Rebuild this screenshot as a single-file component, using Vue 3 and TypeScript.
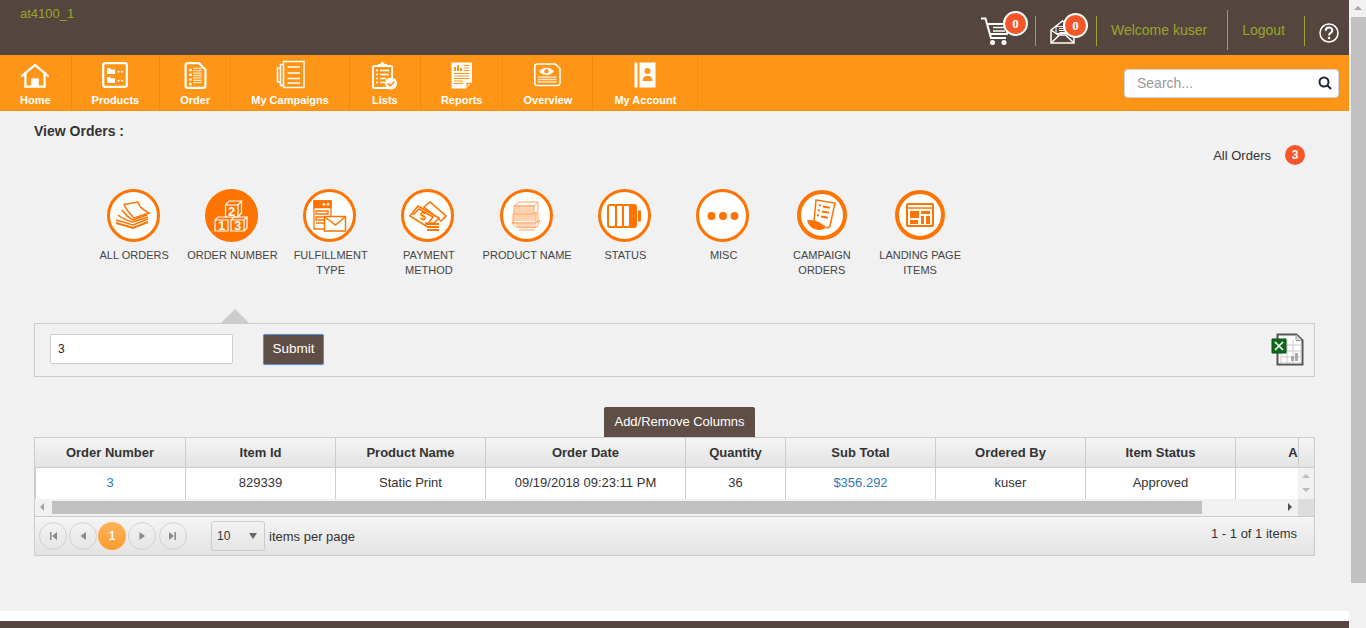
<script setup lang="ts">
const navItems = [
  { key: 'home', label: 'Home' },
  { key: 'products', label: 'Products' },
  { key: 'order', label: 'Order' },
  { key: 'campaigns', label: 'My Campaigns' },
  { key: 'lists', label: 'Lists' },
  { key: 'reports', label: 'Reports' },
  { key: 'overview', label: 'Overview' },
  { key: 'account', label: 'My Account' },
]

const tabs = [
  { key: 'all', label: 'ALL ORDERS' },
  { key: 'number', label: 'ORDER NUMBER', active: true },
  { key: 'fulfillment', label: 'FULFILLMENT TYPE' },
  { key: 'payment', label: 'PAYMENT METHOD' },
  { key: 'product', label: 'PRODUCT NAME' },
  { key: 'status', label: 'STATUS' },
  { key: 'misc', label: 'MISC' },
  { key: 'campaign', label: 'CAMPAIGN ORDERS', small: true },
  { key: 'landing', label: 'LANDING PAGE ITEMS', small: true },
]

const columns = ['Order Number', 'Item Id', 'Product Name', 'Order Date', 'Quantity', 'Sub Total', 'Ordered By', 'Item Status', 'Action']

const cells = [
  { text: '3', link: true },
  { text: '829339' },
  { text: 'Static Print' },
  { text: '09/19/2018 09:23:11 PM' },
  { text: '36' },
  { text: '$356.292', link: true },
  { text: 'kuser' },
  { text: 'Approved' },
  { text: '' },
]

const pagerIcons = [
  'M3 2h1.500v8H3zM10 2v8L5 6z',
  'M9 2v8L3.500 6z',
  null,
  'M3.500 2v8L9 6z',
  'M2 2v8l5-4zM7.500 2H9v8H7.500z',
]
</script>

<template>
  <div class="window">
    <div class="page">
      <header class="topbar">
        <span class="site-name">at4100_1</span>
        <div class="top-actions">
          <div class="top-icon cart">
            <svg width="34" height="30" viewBox="0 0 34 30" fill="none" stroke="#fff">
              <path d="M1 2.500h4.500L11 22h15" stroke-width="2" />
              <path d="M7 8h22l-2 10H10" stroke-width="2" />
              <path d="M13 11.500h13M13 15h12" stroke-width="1.500" />
              <circle cx="12.500" cy="26.500" r="2.500" fill="#fff" stroke="none" />
              <circle cx="24" cy="26.500" r="2.500" fill="#fff" stroke="none" />
            </svg>
            <span class="count count-cart">0</span>
          </div>
          <i class="divider divider-short divider-cart"></i>
          <div class="top-icon mail">
            <svg width="25" height="24" viewBox="0 0 25 24" fill="none" stroke="#fff" stroke-width="1.500">
              <path d="M1 10 12.500 1 24 10v13H1z" />
              <path d="M1 23l8.500-8h6l8.500 8M1 10l8 5.500M24 10l-8 5.500" />
              <path d="M6 6.500h13v7H6z" fill="#54463e" stroke-width="1" />
              <path d="M9 8.500h7M9 10.500h7M9.500 12.500h6" stroke-width="1" />
            </svg>
            <span class="count count-mail">0</span>
          </div>
          <i class="divider divider-short divider-mail"></i>
          <span class="top-link welcome">Welcome kuser</span>
          <i class="divider divider-tall"></i>
          <span class="top-link logout">Logout</span>
          <i class="divider divider-short divider-logout"></i>
          <svg class="help" width="20" height="20" viewBox="0 0 20 20" fill="none">
            <circle cx="10" cy="10" r="9" stroke="#fff" stroke-width="1.500" />
            <path d="M6.800 7.800c0-4.200 6.500-4.200 6.500-.4 0 2.500-3.300 2.400-3.300 5" stroke="#fff" stroke-width="2" />
            <circle cx="10" cy="15" r="1.300" fill="#fff" />
          </svg>
        </div>
      </header>

      <nav class="navbar">
        <a v-for="item in navItems" :key="item.key" class="nav-item">
          <span class="nav-icon">
            <svg v-if="item.key === 'home'" width="30" height="25" viewBox="0 0 30 26" fill="none" stroke="#fff" stroke-width="2.400">
              <path d="M1.500 13.500 15 2l13.500 11.500" stroke-linecap="round" />
              <path d="M5 11.500V24.500h20V11.500" />
              <path d="M11 16h8v8h-8z" fill="#fff" stroke="none" />
            </svg>
            <svg v-else-if="item.key === 'products'" width="26" height="26" viewBox="0 0 26 26" fill="none">
              <rect x="1.200" y="1.200" width="23.600" height="23.600" rx="2" stroke="#fff" stroke-width="2.200" />
              <path d="M5 6h3l1 1.500h4V12H5zM5 15h3l1 1.500h4V21H5z" fill="#fff" />
              <path d="M15.500 9h2v1.500h-2zM19 9h2v1.500h-2zM15.500 18h2v1.500h-2zM19 18h2v1.500h-2z" fill="#fff" />
            </svg>
            <svg v-else-if="item.key === 'order'" width="23" height="27" viewBox="0 0 23 28" fill="none">
              <path d="M3 1.200h12l6.800 6.800v16.500a2.300 2.300 0 0 1-2.300 2.300H3.500a2.300 2.300 0 0 1-2.300-2.300V3a2 2 0 0 1 1.800-1.800z" stroke="#fff" stroke-width="2.200" />
              <path d="M5 7h2.500v2.500H5zM5 12h2.500v2.500H5zM5 17h2.500v2.500H5zM5 21.500h2.500V24H5z" fill="#fff" />
              <path d="M9 6.500h9M9 9h9M9 11.500h9M9 14h9M9 16.500h9M9 19h9M9 21.500h9" stroke="#ffe3bd" stroke-width="1.300" />
            </svg>
            <svg v-else-if="item.key === 'campaigns'" width="29" height="30" viewBox="0 0 29 30" fill="none" stroke="#fff">
              <path d="M7.500 1.500h20.500v26H7.500z" stroke-width="1.500" />
              <path d="M7.500 4.500H4.500v21h3M4.500 8H1.500v14h3" stroke-width="1.500" />
              <path d="M11.500 7h12.500M11.500 13h12.500M11.500 18.500h12.500M11.500 23h12.500" stroke-width="1.300" />
            </svg>
            <svg v-else-if="item.key === 'lists'" width="25" height="29" viewBox="0 0 25 29" fill="none">
              <path d="M2 5h17a1 1 0 0 1 1 1v20a1 1 0 0 1-1 1H2a1 1 0 0 1-1-1V6a1 1 0 0 1 1-1z" stroke="#fff" stroke-width="1.800" />
              <path d="M6 5.500V3h2.500a2 2 0 0 1 4 0H15v2.500z" fill="#fff" />
              <path d="M4 9.500h2M4 13.500h2M4 17.500h2M4 21.500h2M8 9.500h9M8 13.500h9M8 17.500h6M8 21.500h5" stroke="#fff" stroke-width="1.400" />
              <circle cx="19" cy="22.500" r="6" fill="#fff" />
              <path d="M16 22.500l2.300 2.300 4-4.300" stroke="#ff9517" stroke-width="1.800" />
            </svg>
            <svg v-else-if="item.key === 'reports'" width="22" height="27" viewBox="0 0 22 27" fill="none">
              <path d="M0.500 0.500h20.500v20l-6 6H0.500z" fill="#fff" />
              <path d="M3 9V5h2v4zM6 9V3h2v6zM9 9V6h2v3z" fill="#ff9517" />
              <path d="M12.500 3.500h6M12.500 6h6M12.500 8.500h6M3 11.500h15.500M3 14h15.500M3 16.500h15.500M3 19h9M3 21.500h9" stroke="#ff9517" stroke-width="1" />
              <path d="M16 25.500v-4h4.500" stroke="#ff9517" stroke-width="1.300" />
            </svg>
            <svg v-else-if="item.key === 'overview'" width="27" height="24" viewBox="0 0 27 24" fill="none">
              <path d="M3 1h18.500l4.500 4.500V20a2.500 2.500 0 0 1-2.500 2.500H3A2.500 2.500 0 0 1 .8 20V3.500A2.300 2.300 0 0 1 3 1z" stroke="#fff" stroke-width="1.600" />
              <path d="M5 8.500c4-5 11-5 15 0-4 4.500-11 4.500-15 0z" fill="#fff" />
              <circle cx="12.500" cy="8.300" r="2.200" fill="#ff9517" />
              <path d="M4 14h18.500M4 16.500h18.500M4 19h18.500" stroke="#ffe3bd" stroke-width="1.300" />
            </svg>
            <svg v-else width="22" height="26" viewBox="0 0 22 26" fill="none">
              <path d="M0.500 0.500h3v25h-3z" fill="#fff" />
              <path d="M5.500 0.500h16v25h-16z" fill="#fff" />
              <circle cx="13.500" cy="9" r="3" fill="#ff9517" />
              <path d="M8.500 19c0-7 10-7 10 0z" fill="#ff9517" />
            </svg>
          </span>
          <span class="nav-label">{{ item.label }}</span>
        </a>
        <div class="search">
          <input class="search-input" type="text" placeholder="Search..." />
          <svg class="search-icon" width="14" height="14" viewBox="0 0 14 14" fill="none" stroke="#1b2733" stroke-width="2">
            <circle cx="6" cy="6" r="4.500" />
            <path d="M9.500 9.500 13 13" />
          </svg>
        </div>
      </nav>

      <main class="main">
        <div class="title">View Orders :</div>
        <div class="summary">
          <span>All Orders</span>
          <span class="summary-count">3</span>
        </div>

        <div class="tabs">
          <div v-for="tab in tabs" :key="tab.key" class="tab">
            <span class="tab-circle" :class="{ 'tab-active': tab.active, 'tab-small': tab.small }">
              <svg v-if="tab.key === 'all'" width="38" height="30" viewBox="0 0 38 30" fill="none" stroke="#ff7300">
                <path d="M10 3.500 24 1c1 5 5 8 11 11L20 17C16 13 12 8 10 3.500z" stroke-width="1.500" />
                <path d="M8 9c3 4 7 8 11 10l14-5M4 14c5 4 10 6 15 7l15-5M2 19l17 5 15-6" stroke-width="1.500" />
                <path d="M2 22l17 5 15-6" stroke-width="2" />
              </svg>
              <svg v-else-if="tab.key === 'number'" width="34" height="32" viewBox="0 0 34 32" fill="none" stroke="#fff" stroke-width="1.200">
                <path d="M11.500 5h12.500v12H11.500zM11.500 5 15 1h12.500L24 5M24 17l3.500-4V1" />
                <path d="M1 20h13v11H1zM1 20l3-3h9" />
                <path d="M17 20h13v11H17zM17 20l3-3h13l-3 3M30 31l3-3V17" />
                <text x="14.300" y="15.500" class="cube-digit">2</text>
                <text x="4.200" y="30" class="cube-digit">1</text>
                <text x="20.200" y="30" class="cube-digit">3</text>
              </svg>
              <svg v-else-if="tab.key === 'fulfillment'" width="34" height="32" viewBox="0 0 34 32" fill="none" stroke="#ff7300" stroke-width="1.300">
                <path d="M1 1h17v28H1z" />
                <path d="M1 1h17v6.500H1z" fill="#ff7300" />
                <circle cx="11" cy="4.200" r="1.300" fill="#fff" stroke="none" />
                <circle cx="15" cy="4.200" r="1.300" fill="#fff" stroke="none" />
                <path d="M3 11h12v3H3zM3 17h12v3H3zM3 23h9" />
                <path d="M11.500 16.500h21v14.500h-21z" fill="#fff" stroke-width="1.500" />
                <path d="M12 17l10.500 8L32 17" stroke-width="1.500" />
              </svg>
              <svg v-else-if="tab.key === 'payment'" width="38" height="30" viewBox="0 0 38 30" fill="none" stroke="#ff7300" stroke-width="1.600">
                <path d="M15 6 21 1l16 14-5 5z" />
                <path d="M9 5 30 17l-5 5H17v3L1 15z" fill="#fff" />
                <path d="M4 14 10 8 24 16l-4 5" />
                <text x="11" y="19" class="dollar">$</text>
                <path d="M18 23h12M18 26h12M18 29h12" stroke-width="1.800" />
              </svg>
              <svg v-else-if="tab.key === 'product'" width="30" height="30" viewBox="0 0 30 30" fill="none" stroke="#ffa765" stroke-width="1">
                <path d="M3 5 8 1h19l-4 4zM3 5h20v8H3zM23 5l4-4v8l-4 4" />
                <path d="M3 7h20M3 9h20M3 11h20" />
                <path d="M2 13h23v9H2zM2 15h23M2 17h23M2 19h23M25 13l2-2v9l-2 2" />
                <path d="M0.500 22 4 19M1 22h24l4-3-3 7H5z" />
                <path d="M5 24h20M6 26.500h19M8 29h16" />
              </svg>
              <svg v-else-if="tab.key === 'status'" width="34" height="24" viewBox="0 0 34 24" fill="none">
                <rect x="1" y="1" width="28" height="22" rx="2" stroke="#ff7300" stroke-width="2" />
                <path d="M9 1.500v21M16 1.500v21M23 1.500v21" stroke="#ff7300" stroke-width="2" />
                <path d="M24 2h5v20h-5z" fill="#ff7300" />
                <path d="M31 6.500h3v11h-3z" fill="#ff7300" />
              </svg>
              <svg v-else-if="tab.key === 'misc'" width="32" height="10" viewBox="0 0 32 10" fill="#ff7300">
                <circle cx="4.500" cy="5" r="4" />
                <circle cx="16" cy="5" r="4" />
                <circle cx="27.500" cy="5" r="4" />
              </svg>
              <svg v-else-if="tab.key === 'campaign'" width="30" height="32" viewBox="0 0 30 32" fill="none" stroke="#ff7300" stroke-width="1.500">
                <path d="M9 1 28 4l-5 23c-2 3-5 2-6 0L7 22z" />
                <path d="M1 22c5-1 9 2 11 2s3 3 5 5c-5 3-14 0-16-7z" fill="#ff7300" />
                <path d="M12 6l2 .4M11 11l2 .4M10 16l2 .4M16 7.500l7 1.300M15 12.500l7 1.300M14 17.500l7 1.300" stroke-width="2" />
              </svg>
              <svg v-else width="28" height="24" viewBox="0 0 28 24" fill="none">
                <rect x="1" y="1" width="26" height="22" rx="1" stroke="#ff7300" stroke-width="2" />
                <path d="M1 5h26" stroke="#ff7300" stroke-width="1.500" />
                <path d="M4 8h9v7H4zM15 8h9v3H15zM4 17h8v4H4zM15 13h3v8h-3zM20 13h4v8h-4z" fill="#ff7300" />
              </svg>
            </span>
            <span class="tab-label">{{ tab.label }}</span>
          </div>
        </div>

        <div class="filter">
          <span class="filter-arrow"></span>
          <input class="filter-input" type="text" value="3" />
          <button class="filter-submit" type="button">Submit</button>
          <svg class="excel" width="33" height="33" viewBox="0 0 33 33">
            <path d="M6.500 1.500h19l6 6v24h-25z" fill="#fff" stroke="#555" stroke-width="2" />
            <path d="M25 1.500v6h6" fill="#ddd" stroke="#999" />
            <path d="M10 12h20v18H10z" fill="none" stroke="#c9c9c9" />
            <path d="M16 7v23M22 7v23M10 18h20M10 24h20" stroke="#c9c9c9" />
            <path d="M20 28v-5h3v5zM24 28v-8h3v8z" fill="#aaa" />
            <path d="M1 6h14v14H1z" fill="#0c6a1a" stroke="#0a4f12" />
            <path d="M4 9l8 8M12 9l-8 8" stroke="#fff" stroke-width="1.600" />
          </svg>
        </div>

        <div class="grid-actions">
          <button class="columns-btn" type="button">Add/Remove Columns</button>
        </div>

        <div class="grid">
          <div class="grid-head">
            <div class="grid-head-clip">
              <div class="grid-cols">
                <div v-for="col in columns" :key="col" class="head-cell">{{ col }}</div>
              </div>
            </div>
            <div class="head-gutter"></div>
          </div>
          <div class="grid-body">
            <div class="grid-body-clip">
              <div class="grid-cols">
                <div v-for="(cell, i) in cells" :key="i" class="body-cell" :class="{ 'cell-link': cell.link }">{{ cell.text }}</div>
              </div>
            </div>
            <div class="v-scroll">
              <i class="arrow-up"></i>
              <i class="arrow-down"></i>
            </div>
          </div>
          <div class="h-scroll">
            <div class="h-track">
              <i class="arrow-left"></i>
              <span class="h-thumb"></span>
              <i class="arrow-right"></i>
            </div>
            <div class="h-corner"></div>
          </div>
          <div class="pager">
            <div class="pager-buttons">
              <template v-for="(icon, i) in pagerIcons" :key="i">
                <span v-if="icon" class="page-btn">
                  <svg width="12" height="12" viewBox="0 0 12 12" fill="#8a8a8a"><path :d="icon" /></svg>
                </span>
                <span v-else class="page-btn page-current">1</span>
              </template>
            </div>
            <div class="page-size">
              <span>10</span>
              <i class="size-caret"></i>
            </div>
            <span class="page-size-label">items per page</span>
            <span class="page-info">1 - 1 of 1 items</span>
          </div>
        </div>
      </main>

      <div class="footer-gap"></div>
      <footer class="footer"></footer>
    </div>

    <aside class="scrollbar">
      <i class="sb-up"></i>
      <span class="sb-thumb"></span>
    </aside>
  </div>
</template>

<style>
html, body {
  margin: 0;
  overflow: hidden;
}
</style>

<style scoped>
.window {
  display: flex;
  width: 1366px;
  height: 628px;
  overflow: hidden;
  font-family: "Liberation Sans", Arial, sans-serif;
  background: #fff;
  color: #333;
}

.page {
  width: 1349px;
  flex: none;
  display: flex;
  flex-direction: column;
}

.topbar {
  height: 55px;
  flex: none;
  background: #54463e;
  display: flex;
  justify-content: space-between;
}

.site-name {
  margin: 6px 0 0 20px;
  font-size: 13px;
  line-height: 15px;
  color: #9aa52a;
}

.top-actions {
  display: flex;
  align-items: center;
  padding-right: 10px;
}

.top-icon {
  position: relative;
  display: flex;
}

.cart {
  margin-top: 7px;
}

.mail {
  margin-top: 9px;
  margin-left: 14px;
}

.count {
  position: absolute;
  width: 21px;
  height: 21px;
  border: 2px solid #fff;
  border-radius: 50%;
  background: #f4562a;
  color: #fff;
  font-size: 13px;
  font-weight: 700;
  font-family: "Liberation Serif", serif;
  line-height: 21px;
  text-align: center;
}

.count-cart {
  left: 23px;
  top: -5px;
}

.count-mail {
  left: 13px;
  top: -7px;
}

.divider {
  display: block;
  width: 1px;
  background: #9aa52a;
}

.divider-short {
  height: 30px;
  margin-top: 7px;
}

.divider-cart {
  margin-left: 21px;
}

.divider-mail {
  margin-left: 21px;
}

.divider-logout {
  margin-left: 19px;
  margin-top: 6px;
}

.divider-tall {
  height: 40px;
  margin-top: 5px;
}

.top-link {
  font-size: 14px;
  color: #9aa52a;
  margin-top: 5px;
}

.welcome {
  margin: 5px 20px 0 14px;
}

.logout {
  margin-left: 14px;
}

.help {
  margin: 11px 0 0 14px;
}

.navbar {
  height: 56px;
  flex: none;
  background: #ff9517;
  display: flex;
  position: relative;
}

.nav-item {
  min-width: 30px;
  padding: 0 20px;
  border-right: 1px solid #f48a0c;
  display: flex;
  flex-direction: column;
  align-items: center;
  color: #fff;
}

.nav-item:nth-child(8) {
  min-width: 64px;
}

.nav-icon {
  height: 38px;
  display: flex;
  align-items: center;
  padding-top: 2px;
  box-sizing: border-box;
}

.nav-label {
  font-size: 11px;
  font-weight: 700;
  line-height: 14px;
}

.search {
  position: relative;
  margin: 14px 10px 0 auto;
  width: 215px;
  height: 29px;
}

.search-input {
  box-sizing: border-box;
  width: 100%;
  height: 100%;
  border: 1px solid #ccd3e0;
  border-radius: 4px;
  padding: 0 30px 2px 12px;
  font: 14px "Liberation Sans", Arial, sans-serif;
  background: #fff;
  outline: none;
}

.search-input::placeholder {
  color: #999;
  opacity: 1;
}

.search-icon {
  position: absolute;
  right: 7px;
  top: 7px;
}

.main {
  height: 500px;
  flex: none;
  box-sizing: border-box;
  padding: 12px 34px 0;
  background: #f1f1f1;
}

.title {
  font-size: 14px;
  font-weight: 700;
  line-height: 16px;
}

.summary {
  margin-top: 6px;
  height: 20px;
  padding-right: 10px;
  display: flex;
  justify-content: flex-end;
  align-items: center;
  gap: 14px;
  font-size: 13px;
}

.summary-count {
  width: 20px;
  height: 20px;
  border-radius: 50%;
  background: #f4562a;
  color: #fff;
  font-size: 12px;
  font-weight: 700;
  line-height: 20px;
  text-align: center;
}

.tabs {
  margin-top: 24px;
  padding-left: 50px;
  height: 134px;
  display: flex;
  align-items: flex-start;
}

.tab {
  width: 98.250px;
  flex: none;
  display: flex;
  flex-direction: column;
  align-items: center;
}

.tab:nth-child(8) {
  margin-left: 1px;
}

.tab:nth-child(-n+7) .tab-label {
  margin-left: 2px;
}

.tab-circle {
  box-sizing: border-box;
  width: 53px;
  height: 53px;
  border: 3px solid #ff7300;
  border-radius: 50%;
  background: #fff;
  display: flex;
  align-items: center;
  justify-content: center;
}

.tab-active {
  background: #ff7300;
}

.tab-small {
  width: 50px;
  height: 50px;
  margin: 1px 0 2px;
  border-width: 4px;
}

.tab-label {
  margin-top: 6px;
  font-size: 11px;
  line-height: 15px;
  color: #444;
  text-align: center;
}

.cube-digit {
  font: 700 12.500px "Liberation Sans", sans-serif;
  fill: #fff;
  stroke: none;
}

.dollar {
  font: 700 11px "Liberation Sans", sans-serif;
  fill: #ff7300;
  stroke: none;
}

.filter {
  position: relative;
  box-sizing: border-box;
  height: 54px;
  border: 1px solid #ccc;
  display: flex;
  align-items: center;
  padding: 0 10px 2px 15px;
}

.filter-arrow {
  position: absolute;
  left: 186px;
  top: -15px;
  width: 0;
  height: 0;
  border-left: 14px solid transparent;
  border-right: 14px solid transparent;
  border-bottom: 14px solid #ccc;
}

.filter-input {
  box-sizing: border-box;
  width: 183px;
  height: 30px;
  border: 1px solid #ccc;
  border-radius: 2px;
  background: #fff;
  padding: 0 7px;
  font: 12px "Liberation Sans", Arial, sans-serif;
  color: #222;
  outline: none;
}

.filter-submit {
  box-sizing: border-box;
  margin-left: 30px;
  width: 61px;
  height: 31px;
  border: 1px solid #5b8fe0;
  border-radius: 2px;
  box-shadow: 0 0 1px #7aa7ee;
  background: #5f4e45;
  color: #fff;
  font: 13.500px "Liberation Sans", Arial, sans-serif;
  padding: 0 0 1px;
}

.excel {
  margin-left: auto;
}

.grid-actions {
  margin-top: 30px;
  height: 30px;
  padding-left: 10px;
  display: flex;
  justify-content: center;
}

.columns-btn {
  width: 151px;
  height: 30px;
  border: none;
  border-radius: 2px 2px 0 0;
  background: #5f4e45;
  color: #fff;
  font: 13px "Liberation Sans", Arial, sans-serif;
  padding: 0 0 2px;
}

.grid {
  box-sizing: border-box;
  height: 119px;
  border: 1px solid #ccc;
  display: flex;
  flex-direction: column;
}

.grid-head {
  height: 29px;
  flex: none;
  display: flex;
  border-bottom: 1px solid #ccc;
  background: linear-gradient(#f5f5f5, #e3e3e3);
}

.grid-head-clip,
.grid-body-clip {
  width: 1263px;
  flex: none;
  overflow: hidden;
}

.grid-cols {
  display: grid;
  grid-template-columns: 151px 150px 150px 200px 100px 150px 150px 150px 146px;
  width: 1347px;
  height: 100%;
}

.head-cell {
  box-sizing: border-box;
  border-right: 1px solid #ccc;
  font-size: 13px;
  font-weight: 700;
  line-height: 29px;
  text-align: center;
  color: #333;
}

.head-gutter {
  flex: 1;
  border-left: 1px solid #ccc;
}

.grid-body {
  height: 31px;
  flex: none;
  display: flex;
}

.grid-body-clip {
  background: #fff;
  box-sizing: border-box;
  border-left: 1px solid #ccc;
}

.grid-body-clip .grid-cols {
  margin-left: -1px;
}

.body-cell {
  box-sizing: border-box;
  border-right: 1px solid #ccc;
  font-size: 13px;
  line-height: 29px;
  text-align: center;
  color: #333;
}

.cell-link {
  color: #337ab7;
}

.v-scroll {
  flex: 1;
  background: #f1f1f1;
  position: relative;
}

.arrow-up,
.arrow-down {
  position: absolute;
  left: 4px;
  width: 0;
  height: 0;
  border-left: 4px solid transparent;
  border-right: 4px solid transparent;
}

.arrow-up {
  top: 6px;
  border-bottom: 4px solid #bbb;
}

.arrow-down {
  top: 20px;
  border-top: 4px solid #bbb;
}

.h-scroll {
  height: 17px;
  flex: none;
  display: flex;
  border-bottom: 1px solid #ccc;
}

.h-track {
  width: 1263px;
  flex: none;
  background: #f1f1f1;
  display: flex;
  align-items: center;
  position: relative;
}

.arrow-left,
.arrow-right {
  position: absolute;
  top: 4px;
  width: 0;
  height: 0;
  border-top: 4px solid transparent;
  border-bottom: 4px solid transparent;
}

.arrow-left {
  left: 5px;
  border-right: 4px solid #a3a3a3;
}

.arrow-right {
  right: 6px;
  border-left: 4px solid #505050;
}

.h-thumb {
  margin-left: 17px;
  width: 1150px;
  height: 13px;
  background: #c1c1c1;
}

.h-corner {
  flex: 1;
  background: #dcdcdc;
}

.pager {
  flex: 1;
  display: flex;
  align-items: center;
  padding: 0 17px 0 4px;
  background: linear-gradient(#f5f5f5, #e3e3e3);
  font-size: 13px;
  color: #333;
}

.pager-buttons {
  display: flex;
  gap: 2px;
}

.page-btn {
  box-sizing: border-box;
  width: 28px;
  height: 28px;
  border: 1px solid #d0d0d0;
  border-radius: 50%;
  display: flex;
  align-items: center;
  justify-content: center;
}

.page-btn svg {
  display: block;
}

.page-current {
  margin-left: -1px;
  border: none;
  background: linear-gradient(#ffb35c, #ff9c2e);
  color: #fff;
  font-size: 12px;
  font-weight: 700;
}

.page-btn:last-child {
  margin-left: 1px;
}

.page-size {
  box-sizing: border-box;
  width: 54px;
  height: 30px;
  margin-left: 24px;
  border: 1px solid #ccc;
  border-radius: 3px;
  display: flex;
  align-items: center;
  justify-content: space-between;
  padding: 0 7px 0 5px;
  font-size: 12px;
}

.size-caret {
  width: 0;
  height: 0;
  border-left: 4px solid transparent;
  border-right: 4px solid transparent;
  border-top: 6px solid #666;
}

.page-size-label {
  margin-left: 4px;
}

.page-info {
  margin-left: auto;
  margin-top: -5px;
}

.footer-gap {
  height: 10px;
  flex: none;
  background: #fff;
}

.footer {
  flex: 1;
  background: #54463e;
}

.scrollbar {
  flex: 1;
  background: #f1f1f1;
  position: relative;
}

.sb-up {
  position: absolute;
  left: 5px;
  top: 6px;
  width: 0;
  height: 0;
  border-left: 4px solid transparent;
  border-right: 4px solid transparent;
  border-bottom: 4px solid #a3a3a3;
}

.sb-thumb {
  position: absolute;
  left: 2px;
  right: 0;
  top: 17px;
  height: 566px;
  background: #c1c1c1;
}
</style>
